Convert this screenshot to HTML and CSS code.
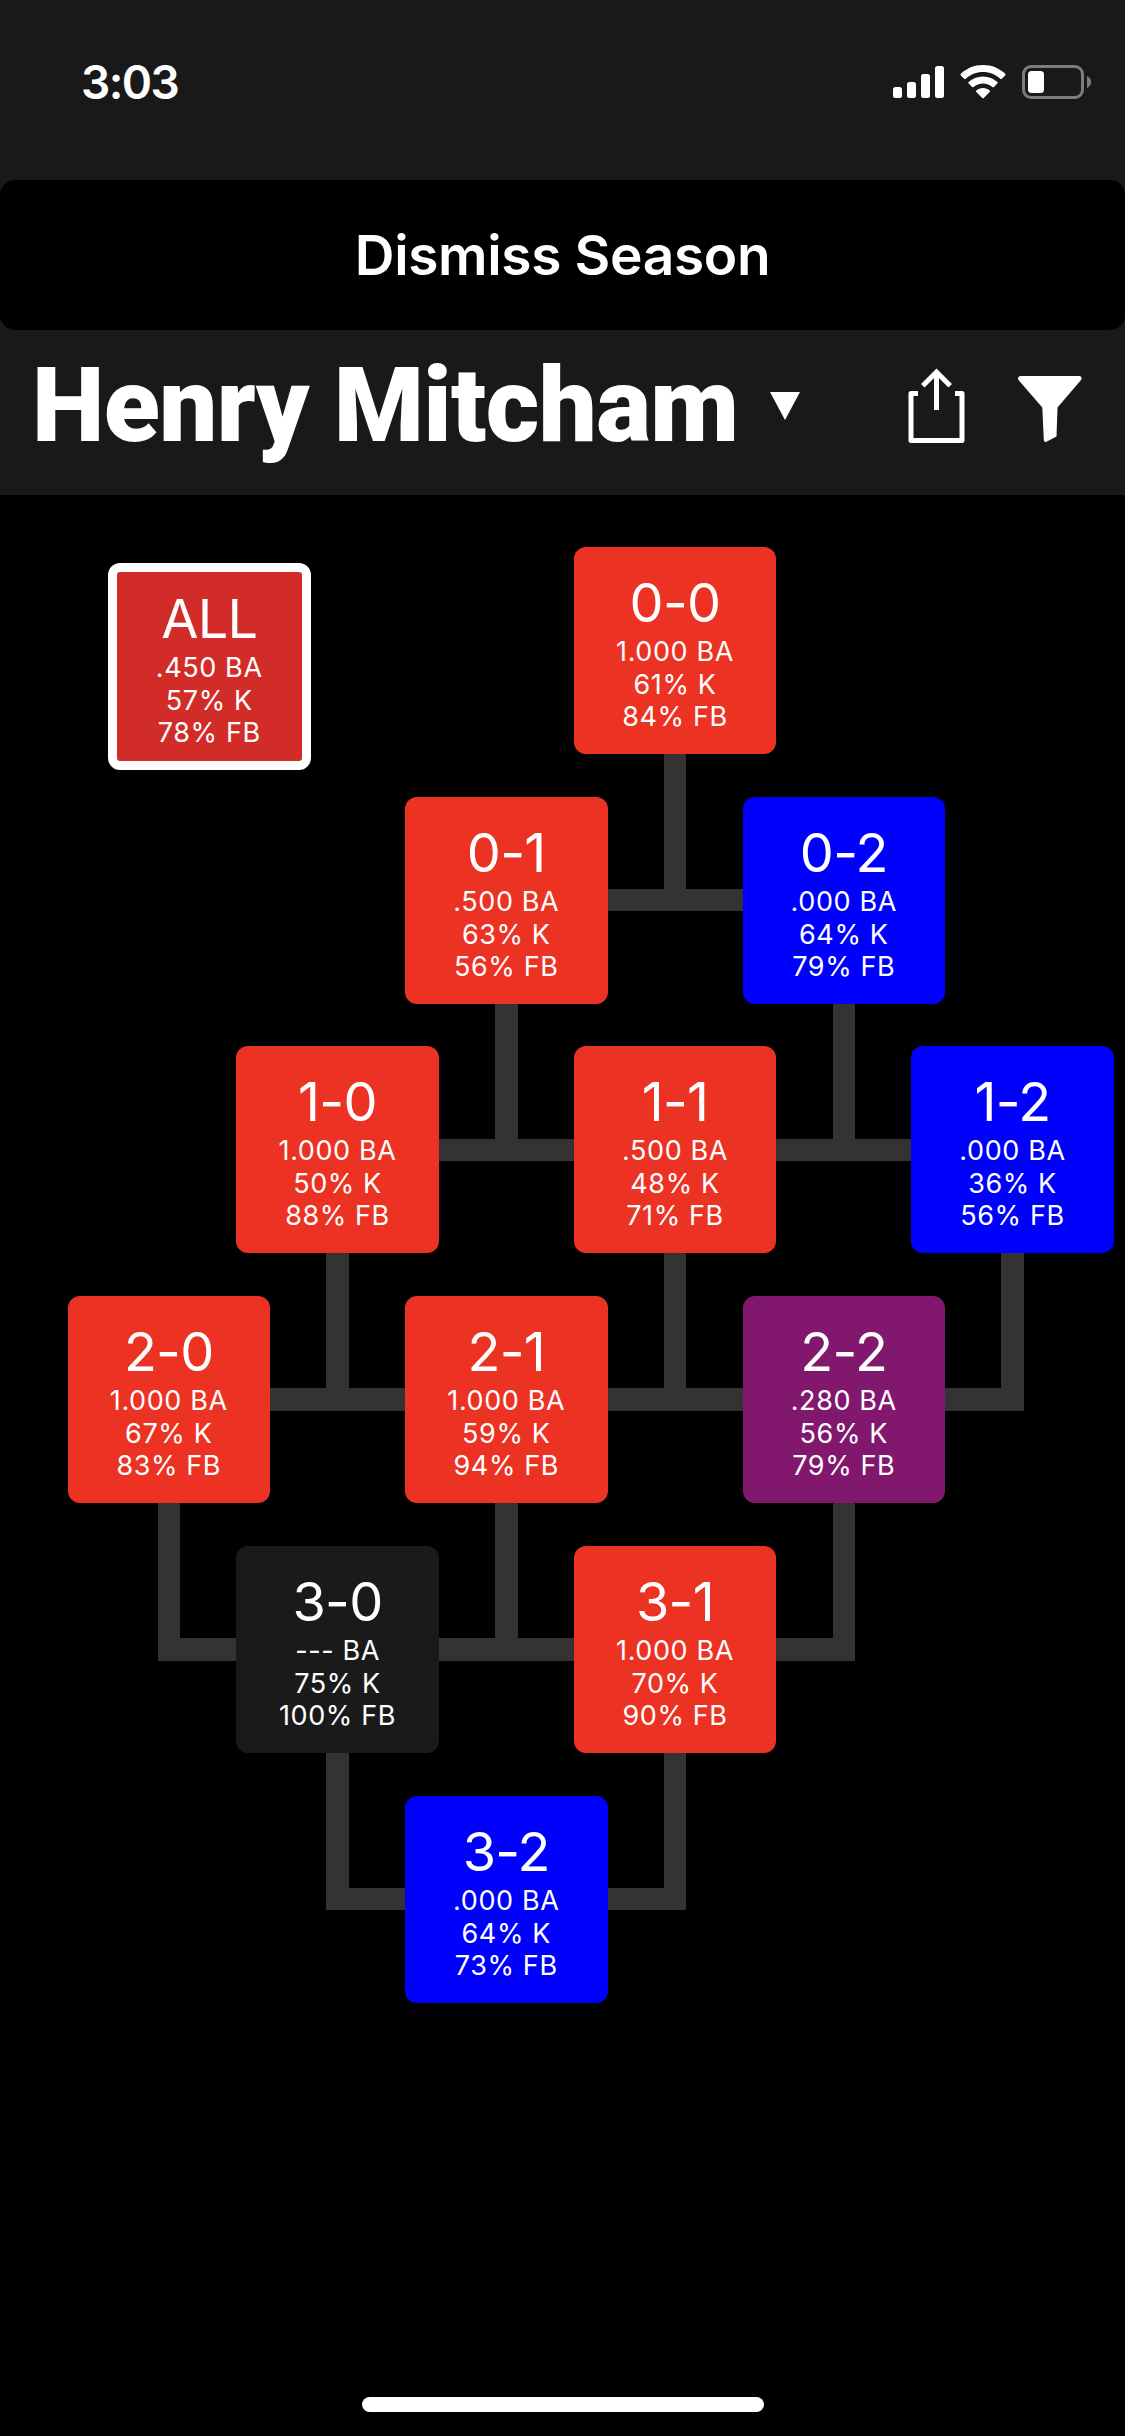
FILE: index.html
```html
<!DOCTYPE html>
<html lang="en">
<head>
<meta charset="utf-8">
<title>Henry Mitcham</title>
<link rel="stylesheet" href="styles.css">
</head>
<body>
<div class="screen">
  <header class="status-bar">
    <span class="clock">3:03</span>
    <svg class="status-icons" width="200" height="36" viewBox="892 64 200 36" fill="#fff">
      <rect x="893" y="87" width="9" height="11" rx="2.5"/>
      <rect x="907" y="82" width="9" height="16" rx="2.5"/>
      <rect x="921" y="74" width="9" height="24" rx="2.5"/>
      <rect x="935" y="66" width="9" height="32" rx="2.5"/>
      <path d="M983 65C991.800 65 999.600 68.400 1005.200 73.800Q1006 74.600 1005.200 75.400L1001.800 78.800Q1001 79.600 1000.200 78.800C995.700 74.600 989.600 72 983 72C976.400 72 970.300 74.600 965.800 78.800Q965 79.600 964.200 78.800L960.800 75.400Q960 74.600 960.800 73.800C966.400 68.400 974.200 65 983 65Z"/>
      <path d="M983 76.500C988.600 76.500 993.600 78.600 997.400 82Q998.200 82.800 997.400 83.600L993.900 87Q993.100 87.700 992.300 87C989.800 84.800 986.600 83.500 983 83.500C979.400 83.500 976.200 84.800 973.700 87Q972.900 87.700 972.100 87L968.600 83.600Q967.800 82.800 968.600 82C972.400 78.600 977.400 76.500 983 76.500Z"/>
      <path d="M983 88C985.600 88 987.900 88.900 989.700 90.400Q990.500 91.200 989.700 92L983.800 97.900Q983 98.600 982.200 97.900L976.300 92Q975.500 91.200 976.300 90.400C978.100 88.900 980.400 88 983 88Z"/>
      <rect x="1023.500" y="66.500" width="59" height="31" rx="7.500" fill="none" stroke="#7c7c7c" stroke-width="3"/>
      <rect x="1028" y="71" width="16" height="22" rx="3.500"/>
      <path d="M1087 76C1092.500 78.500 1092.500 85.500 1087 88Z" fill="#7c7c7c"/>
    </svg>
  </header>
  <button class="dismiss">Dismiss Season</button>
  <div class="title-bar">
    <h1 class="player">Henry Mitcham</h1>
    <svg class="caret" width="30" height="28" viewBox="0 0 30 28"><path d="M0 0H30L15 28Z" fill="#fff"/></svg>
    <svg class="share" width="58" height="78" viewBox="908 367 58 78" fill="none" stroke="#fff" stroke-width="5" stroke-linejoin="round">
      <path d="M918 393.500H911V440.500H962V393.500H955"/>
      <path d="M936.500 410V372M922.800 385.800L936.500 372L950.200 385.800" stroke-linejoin="miter"/>
    </svg>
    <svg class="filter" width="66" height="68" viewBox="1017 375 66 68" fill="#fff">
      <path d="M1020 376H1080Q1082.500 377 1081 380L1057.500 407.500L1056.500 436.500L1046 442Q1044 442.500 1043.800 440L1042.300 407.500L1018.500 380Q1017 377 1020 376Z"/>
    </svg>
  </div>
  <main class="tree">
    <svg class="links" width="1125" height="1941" viewBox="0 495 1125 1941" fill="#343233" shape-rendering="crispEdges">
      <path d="M664 740H686V889H760V911H590V889H664Z"/>
      <path d="M495 990H518V1139H833V990H855V1139H930V1161H420V1139H495Z"/>
      <path d="M326 1240H349V1388H664V1240H686V1388H1001V1240H1024V1411H260V1388H326Z"/>
      <path d="M158 1490H180V1638H495V1490H518V1638H833V1490H855V1661H158Z"/>
      <path d="M326 1740H349V1888H664V1740H686V1910H326Z"/>
    </svg>
    <article class="node all"><h2>ALL</h2><p>.450 BA</p><p>57% K</p><p>78% FB</p></article>
    <article class="node r0 c3 red"><h2>0-0</h2><p>1.000 BA</p><p>61% K</p><p>84% FB</p></article>
    <article class="node r1 c2 red"><h2>0-1</h2><p>.500 BA</p><p>63% K</p><p>56% FB</p></article>
    <article class="node r1 c4 blue"><h2>0-2</h2><p>.000 BA</p><p>64% K</p><p>79% FB</p></article>
    <article class="node r2 c1 red"><h2>1-0</h2><p>1.000 BA</p><p>50% K</p><p>88% FB</p></article>
    <article class="node r2 c3 red"><h2>1-1</h2><p>.500 BA</p><p>48% K</p><p>71% FB</p></article>
    <article class="node r2 c5 blue"><h2>1-2</h2><p>.000 BA</p><p>36% K</p><p>56% FB</p></article>
    <article class="node r3 c0 red"><h2>2-0</h2><p>1.000 BA</p><p>67% K</p><p>83% FB</p></article>
    <article class="node r3 c2 red"><h2>2-1</h2><p>1.000 BA</p><p>59% K</p><p>94% FB</p></article>
    <article class="node r3 c4 purple"><h2>2-2</h2><p>.280 BA</p><p>56% K</p><p>79% FB</p></article>
    <article class="node r4 c1 gray"><h2>3-0</h2><p>--- BA</p><p>75% K</p><p>100% FB</p></article>
    <article class="node r4 c3 red"><h2>3-1</h2><p>1.000 BA</p><p>70% K</p><p>90% FB</p></article>
    <article class="node r5 c2 blue"><h2>3-2</h2><p>.000 BA</p><p>64% K</p><p>73% FB</p></article>
    <div class="home-indicator"></div>
  </main>
</div>
</body>
</html>
```
FILE: styles.css
```css
* { box-sizing: border-box; margin: 0; padding: 0; }
body { background: #000; color: #fff; font-family: Inter, "Liberation Sans", sans-serif; }
svg { display: block; flex: none; }
.screen { width: 1125px; height: 2436px; display: flex; flex-direction: column; background: #191919; overflow: hidden; }

.status-bar { height: 180px; display: flex; justify-content: space-between; align-items: flex-start; padding: 54px 33px 0 81px; }
.clock { font-size: 46px; line-height: 56px; font-weight: 600; letter-spacing: -1.600px; }
.status-icons { margin-top: 10px; }

.dismiss { height: 150px; border: 0; border-radius: 15px; background: #000; color: #fff; font: 600 55px/150px Inter, "Liberation Sans", sans-serif; letter-spacing: -0.350px; text-align: center; }

.title-bar { height: 165px; display: flex; align-items: flex-start; padding-left: 32px; }
.player { width: 738px; font: 900 103px/120px Roboto, "Liberation Sans", sans-serif; letter-spacing: -0.650px; white-space: nowrap; margin-top: 16px; }
.caret { margin-top: 62px; }
.share { margin: 37px 0 0 108px; }
.filter { margin: 45px 0 0 51px; }

.tree { position: relative; flex: 1; background: #000; }
.links { position: absolute; left: 0; top: 0; }
.node { position: absolute; width: 202.5px; height: 207px; padding-top: 23px; border-radius: 12px; text-align: center; }
.node h2 { font-size: 54px; line-height: 65px; font-weight: 400; letter-spacing: -0.700px; }
.node p { font-size: 27px; line-height: 33px; letter-spacing: 0.600px; }
.node p:last-child { line-height: 32px; }
.all { left: 108px; top: 68px; background: #d22c29; border: 9px solid #fff; padding-top: 14px; }
.r0 { top: 52px; }
.r1 { top: 302px; }
.r2 { top: 551px; }
.r3 { top: 801px; }
.r4 { top: 1051px; }
.r5 { top: 1301px; }
.c0 { left: 67.500px; }
.c1 { left: 236.250px; }
.c2 { left: 405px; }
.c3 { left: 573.750px; }
.c4 { left: 742.500px; }
.c5 { left: 911.250px; }
.red { background: #ec3223; }
.blue { background: #0000fd; }
.purple { background: #82176e; }
.gray { background: #1b1a1b; }
.home-indicator { position: absolute; left: 362px; top: 1902px; width: 402px; height: 15px; border-radius: 7.500px; background: #fff; }
```
